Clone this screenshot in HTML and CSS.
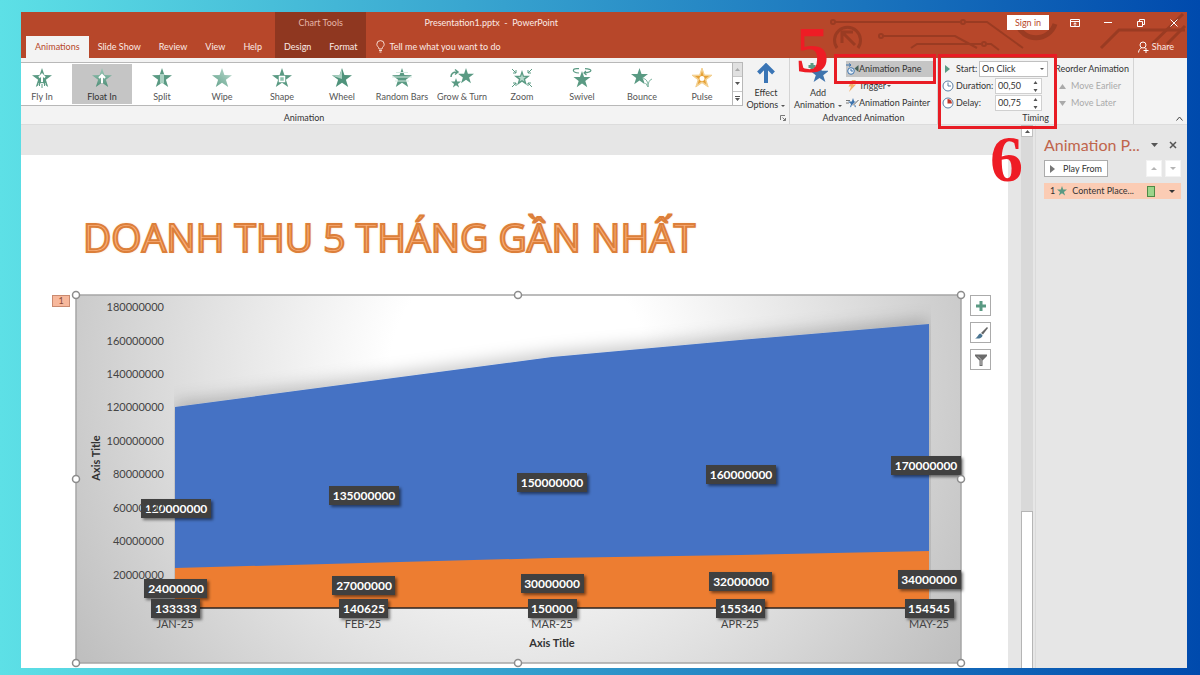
FILE: index.html
```
<!DOCTYPE html>
<html lang="vi">
<head>
    <meta charset="UTF-8">
    <meta name="viewport" content="width=device-width, initial-scale=1.0">
    <title>Presentation1.pptx - PowerPoint</title>
    <link rel="stylesheet" href="styles.css">
</head>
<body>
    <!-- Shared icon shapes -->
    <svg class="defs" width="0" height="0" aria-hidden="true">
        <defs>
            <linearGradient id="fadeDown" x1="0" y1="0" x2="0" y2="1">
                <stop offset="0" stop-color="#9cc9b8"/>
                <stop offset="1" stop-color="#4f8f78"/>
            </linearGradient>
            <linearGradient id="fadeUp" x1="1" y1="0" x2="0" y2="1">
                <stop offset="0" stop-color="#bfded2"/>
                <stop offset="1" stop-color="#5f9f88"/>
            </linearGradient>
            <symbol id="star" viewBox="0 0 20 20">
                <path d="M10 0L12.4 7.1L20 7.2L13.9 11.8L16.2 19L10 14.7L3.8 19L6.1 11.8L0 7.2L7.6 7.1Z"/>
            </symbol>
        </defs>
    </svg>

    <div class="window">
        <header class="titlebar">
            <svg class="circuit" viewBox="0 0 370 46" aria-hidden="true">
                <g fill="none" stroke="#9a3b22" stroke-width="2">
                    <circle cx="16" cy="10" r="2"/>
                    <path d="M18 10H143M149 10H170L206 36"/>
                    <circle cx="146" cy="10" r="2"/>
                    <circle cx="64" cy="24" r="2"/>
                    <path d="M66 24H138L160 36"/>
                    <path d="M94 36L100 32H164"/>
                    <circle cx="167" cy="32" r="2"/>
                    <path d="M169 32H174L182 38"/>
                    <path d="M20 36A13 13 0 1 1 41 36" stroke-width="3"/>
                    <path d="M25 31V20H36M26 21L38 33" stroke-width="3"/>
                    <path d="M200 12A20 20 0 0 0 238 12" stroke-width="5"/>
                    <path d="M284 36L302 18H368" stroke-width="3"/>
                    <path d="M335 32L366 2M350 32L368 14" stroke-width="3"/>
                </g>
            </svg>
            <nav class="tabs">
                <a class="tab active" href="#animations">Animations</a>
                <a class="tab" href="#slideshow">Slide Show</a>
                <a class="tab" href="#review">Review</a>
                <a class="tab" href="#view">View</a>
                <a class="tab" href="#help">Help</a>
            </nav>
            <div class="context">
                <div class="context-title">Chart Tools</div>
                <nav class="tabs">
                    <a class="tab" href="#design">Design</a>
                    <a class="tab" href="#format">Format</a>
                </nav>
            </div>
            <div class="title-right">
                <div class="title-row">
                    <span class="doc-name">Presentation1.pptx &nbsp;- &nbsp;PowerPoint</span>
                    <button class="sign-in">Sign in</button>
                    <button class="win-btn" aria-label="Ribbon display options">
                        <svg width="10" height="8" viewBox="0 0 10 8"><path d="M.5.5h9v7h-9zM.5 2.5h9M5 7V4M3.500 5L5 3.800L6.500 5" fill="none" stroke="#fff"/></svg>
                    </button>
                    <button class="win-btn" aria-label="Minimize">
                        <svg width="8" height="8" viewBox="0 0 8 8"><path d="M0 3.500h8" stroke="#fff"/></svg>
                    </button>
                    <button class="win-btn" aria-label="Restore">
                        <svg width="8" height="8" viewBox="0 0 8 8"><path d="M.5 2.500h5v5h-5zM2.500 2V.5h5v5H6" fill="none" stroke="#fff"/></svg>
                    </button>
                    <button class="win-btn" aria-label="Close">
                        <svg width="8" height="8" viewBox="0 0 8 8"><path d="M.5.5l7 7M7.500.5l-7 7" stroke="#fff"/></svg>
                    </button>
                </div>
                <div class="title-row">
                    <button class="tell-me">
                        <svg width="9" height="13" viewBox="0 0 9 13"><path d="M3 9C3 7 .8 6.500.8 4.300a3.700 3.700 0 0 1 7.400 0C8.200 6.500 6 7 6 9zM3 10.500h3M3.500 12h2" fill="none" stroke="#f5d9d0"/></svg>
                        Tell me what you want to do
                    </button>
                    <button class="share">
                        <svg width="11" height="12" viewBox="0 0 11 12"><circle cx="5" cy="4" r="3" fill="none" stroke="#fff"/><path d="M.5 11.500C.8 9 2 7.500 3.500 7M6.500 7l1 .6M5.500 9.500h5M8 7v5" fill="none" stroke="#fff"/></svg>
                        Share
                    </button>
                </div>
            </div>
        </header>

        <section class="ribbon">
            <div class="group group-animation">
                <div class="group-body">
                    <div class="gallery">
                        <div class="effects">
                            <button class="effect">
                                <svg viewBox="0 0 20 20"><use href="#star" fill="#5a9a83"/><path d="M10 6V14M7 9.500L10 6.500L13 9.500" fill="none" stroke="#fff" stroke-width="2"/><path d="M7.500 15v4M10 16v4M12.500 15v4" stroke="#fff" stroke-width="2"/><path d="M7.500 15v3M10 16v4M12.500 15v3" stroke="#5a9a83"/></svg>
                                Fly In
                            </button>
                            <button class="effect selected">
                                <svg viewBox="0 0 20 20"><use href="#star" fill="url(#fadeDown)"/><path d="M10 7V15M7 10L10 7L13 10" fill="none" stroke="#fff" stroke-width="2"/></svg>
                                Float In
                            </button>
                            <button class="effect">
                                <svg viewBox="0 0 20 20"><use href="#star" fill="#5a9a83"/><path d="M8 6h4v10l-2-1.300l-2 1.300z" fill="#a9d0c1"/></svg>
                                Split
                            </button>
                            <button class="effect">
                                <svg viewBox="0 0 20 20"><use href="#star" fill="url(#fadeUp)"/></svg>
                                Wipe
                            </button>
                            <button class="effect">
                                <svg viewBox="0 0 20 20"><use href="#star" fill="#5a9a83"/><path d="M7.500 8.500h5v5h-5z" fill="#8ec2ae" stroke="#fff" stroke-width="1.500"/></svg>
                                Shape
                            </button>
                            <button class="effect">
                                <svg viewBox="0 0 20 20"><use href="#star" fill="#4f937b"/><path d="M10 1V11L1 8V7.200L7.600 7.100Z" fill="#a9d0c1"/></svg>
                                Wheel
                            </button>
                            <button class="effect">
                                <svg viewBox="0 0 20 20"><use href="#star" fill="#5a9a83"/><path d="M4 4.500h12M0 9h20M3 13h14" stroke="#d4e9e0"/></svg>
                                Random Bars
                            </button>
                            <button class="effect">
                                <svg class="wide" viewBox="0 0 24 20"><use href="#star" x="8" y="0" width="16" height="16" fill="#5a9a83"/><use href="#star" x="1" y="10" width="10" height="10" fill="#5a9a83"/><path d="M1 9C1 5 4 4 7 4M5 1.500L8 4L5 6.500" fill="none" stroke="#5a9a83" stroke-width="1.500"/></svg>
                                Grow &amp; Turn
                            </button>
                            <button class="effect">
                                <svg class="wide" viewBox="0 0 24 20"><use href="#star" x="4" y="2" width="16" height="16" fill="#5a9a83"/><use href="#star" x="8" y="6" width="8" height="8" fill="#b7dacc"/><path d="M2 1l4 4M6 2v3H3M22 1l-4 4M18 2v3h3M2 19l4-4M3 15h3v3M22 19l-4-4M21 15h-3v3" fill="none" stroke="#5a9a83"/></svg>
                                Zoom
                            </button>
                            <button class="effect">
                                <svg viewBox="0 0 20 20"><use href="#star" x="1" y="3" width="18" height="17" fill="#5a9a83"/><path d="M7 5C-1 4 0 0 7 .7M13 .7C21 1 21 4 12 5M14 3L12 5L14.500 7" fill="none" stroke="#5a9a83" stroke-width="1.200"/></svg>
                                Swivel
                            </button>
                            <button class="effect">
                                <svg class="wide" viewBox="0 0 24 20"><use href="#star" x="1" y="0" width="17" height="17" fill="#5a9a83"/><path d="M12 10C17 11 18 14 18 19M18 19C18 15 19 12 22 11M15.500 15l2.500 4" fill="none" stroke="#7fb5a1"/></svg>
                                Bounce
                            </button>
                            <button class="effect">
                                <svg viewBox="0 0 20 20"><use href="#star" fill="#f3cf8e" stroke="#f3cf8e" stroke-width="1"/><use href="#star" x="3" y="3" width="14" height="14" fill="#e6a136"/><circle cx="10" cy="10.500" r="2.500" fill="#fff"/></svg>
                                Pulse
                            </button>
                        </div>
                        <div class="gallery-scroll">
                            <button class="disabled" aria-label="Up"><svg width="5" height="3" viewBox="0 0 5 3"><path d="M0 3h5L2.500 0z" fill="#aaa"/></svg></button>
                            <button aria-label="Down"><svg width="5" height="3" viewBox="0 0 5 3"><path d="M0 0h5L2.500 3z" fill="#555"/></svg></button>
                            <button aria-label="More"><svg width="5" height="5" viewBox="0 0 5 5"><path d="M0 0h5v1h-5zM0 2h5L2.500 5z" fill="#555"/></svg></button>
                        </div>
                    </div>
                    <button class="big-btn effect-options">
                        <svg width="18" height="20" viewBox="0 0 18 20"><path d="M9 20V3M1.500 10L9 2.500L16.500 10" fill="none" stroke="#3a75b5" stroke-width="4"/></svg>
                        <span>Effect<br>Options <i class="caret"></i></span>
                    </button>
                </div>
                <div class="group-label">
                    <span>Animation</span>
                    <svg width="6" height="6" viewBox="0 0 6 6"><path d="M.5 5V.5H5M2.500 2.500L5.500 5.500M5.500 3v2.500H3" fill="none" stroke="#777"/></svg>
                </div>
            </div>

            <div class="group group-advanced">
                <div class="group-body">
                    <button class="big-btn">
                        <svg width="20" height="20" viewBox="0 0 20 20"><use href="#star" x="2" y="1" width="19" height="19" fill="#3f74ad"/><path d="M4 0v7M.5 3.500h7" stroke="#5a9a83" stroke-width="3"/></svg>
                        <span>Add<br>Animation <i class="caret"></i></span>
                    </button>
                    <div class="stack">
                        <button class="row-btn pressed">
                            <svg width="13" height="12" viewBox="0 0 13 12"><circle cx="5" cy="8" r="3.300" fill="#e8f0f7" stroke="#3f74ad"/><path d="M5 6v2h2M0 2h5M3 .5L5 2L3 3.500" fill="none" stroke="#3f74ad"/><path d="M12.500 2v7L8.500 5.500z" fill="#47635a"/></svg>
                            Animation Pane
                        </button>
                        <button class="row-btn">
                            <svg width="13" height="12" viewBox="0 0 13 12"><path d="M6 0H10L7 4.500H10L3 12L5 6.500H2.500z" fill="#f3b169"/></svg>
                            Trigger <i class="caret"></i>
                        </button>
                        <button class="row-btn">
                            <svg width="13" height="12" viewBox="0 0 13 12"><use href="#star" x="2" y="1" width="10" height="10" fill="#3f74ad"/><path d="M0 3.500h4M0 6h3" stroke="#777"/><path d="M12.500 3L6 9.500" stroke="#fff" stroke-width="2"/><path d="M12.500 3L7 8.500" stroke="#555"/></svg>
                            Animation Painter
                        </button>
                    </div>
                </div>
                <div class="group-label"><span>Advanced Animation</span></div>
                <div class="mark mark-pane"></div>
                <div class="step step-five">5</div>
            </div>

            <div class="group group-timing">
                <div class="group-body">
                    <div class="timing">
                        <div class="field">
                            <svg width="12" height="12" viewBox="0 0 12 12"><path d="M3 2v8L8 6z" fill="#5a9a83"/></svg>
                            <label for="start">Start:</label>
                            <div class="drop">
                                <select id="start"><option>On Click</option></select>
                                <i class="caret"></i>
                            </div>
                        </div>
                        <div class="field">
                            <svg width="12" height="12" viewBox="0 0 12 12"><circle cx="6" cy="6" r="5" fill="#fff" stroke="#5d7fa3"/><path d="M6 2.500V6h3" fill="none" stroke="#5d7fa3"/></svg>
                            <label for="duration">Duration:</label>
                            <div class="spin">
                                <input id="duration" type="text" value="00,50">
                                <svg width="5" height="11" viewBox="0 0 5 11"><path d="M.5 3h4L2.500 0zM.5 8h4L2.500 11z" fill="#555"/></svg>
                            </div>
                        </div>
                        <div class="field">
                            <svg width="12" height="12" viewBox="0 0 12 12"><circle cx="6" cy="6" r="5" fill="#fff" stroke="#5d7fa3"/><path d="M5.500 6.500V2A4.500 4.500 0 0 1 10 6.500z" fill="#c0392b"/></svg>
                            <label for="delay">Delay:</label>
                            <div class="spin">
                                <input id="delay" type="text" value="00,75">
                                <svg width="5" height="11" viewBox="0 0 5 11"><path d="M.5 3h4L2.500 0zM.5 8h4L2.500 11z" fill="#555"/></svg>
                            </div>
                        </div>
                    </div>
                    <div class="stack reorder">
                        <div class="row-btn heading">Reorder Animation</div>
                        <button class="row-btn" disabled>
                            <svg width="7" height="5" viewBox="0 0 7 5"><path d="M0 5h7L3.500 0z" fill="#aaa"/></svg>
                            Move Earlier
                        </button>
                        <button class="row-btn" disabled>
                            <svg width="7" height="5" viewBox="0 0 7 5"><path d="M0 0h7L3.500 5z" fill="#aaa"/></svg>
                            Move Later
                        </button>
                    </div>
                </div>
                <div class="group-label"><span>Timing</span></div>
                <div class="mark mark-timing"></div>
                <div class="step step-six">6</div>
            </div>

            <button class="collapse" aria-label="Collapse ribbon">
                <svg width="7" height="5" viewBox="0 0 7 5"><path d="M.5 4.500L3.500 1L6.500 4.500" fill="none" stroke="#444"/></svg>
            </button>
        </section>

        <main class="workspace">
            <div class="canvas">
                <div class="slide">
                    <h1>DOANH THU 5 THÁNG GẦN NHẤT</h1>
                    <div class="chart-row">
                        <span class="anim-tag">1</span>
                        <svg class="chart" viewBox="0 0 885 368">
                            <defs>
                                <radialGradient id="chartBg" gradientUnits="userSpaceOnUse" cx="443" cy="80" r="520">
                                    <stop offset="0.25" stop-color="#ffffff"/>
                                    <stop offset="0.6" stop-color="#e2e2e2"/>
                                    <stop offset="1" stop-color="#bfbfbf"/>
                                </radialGradient>
                                <filter id="areaShadow" x="-10%" y="-20%" width="120%" height="140%">
                                    <feDropShadow dx="0" dy="-5" stdDeviation="8" flood-color="#000" flood-opacity="0.2"/>
                                </filter>
                                <filter id="labelShadow" x="-20%" y="-40%" width="150%" height="200%">
                                    <feDropShadow dx="2" dy="2" stdDeviation="1.500" flood-color="#000" flood-opacity="0.5"/>
                                </filter>
                                <clipPath id="plotClip"><rect x="98" y="0" width="757" height="314"/></clipPath>
                            </defs>
                            <rect width="885" height="368" fill="url(#chartBg)" stroke="#a6a6a6" stroke-width="1.500"/>

                            <!-- Areas -->
                            <g clip-path="url(#plotClip)">
                                <path d="M99 112L287 87L476 62L664 45L853 29V313H99Z" fill="#4472c4" filter="url(#areaShadow)"/>
                            </g>
                            <path d="M99 273L287 268L476 263L664 260L853 256V313H99Z" fill="#ed7d31"/>
                            <path d="M99 313H853" stroke="#2b2320" stroke-width="1.500"/>

                            <!-- Data labels -->
                            <g class="data-labels" filter="url(#labelShadow)">
                                <rect x="65" y="204" width="70" height="19"/>
                                <rect x="253" y="191" width="70" height="19"/>
                                <rect x="441" y="178" width="70" height="19"/>
                                <rect x="630" y="170" width="70" height="19"/>
                                <rect x="815" y="161" width="70" height="19"/>
                                <rect x="68" y="284" width="63" height="19"/>
                                <rect x="256" y="281" width="63" height="19"/>
                                <rect x="445" y="279" width="63" height="19"/>
                                <rect x="633" y="277" width="63" height="19"/>
                                <rect x="822" y="275" width="63" height="19"/>
                                <rect x="75" y="304" width="49" height="19"/>
                                <rect x="263" y="304" width="49" height="19"/>
                                <rect x="452" y="304" width="49" height="19"/>
                                <rect x="640" y="304" width="49" height="19"/>
                                <rect x="829" y="304" width="49" height="19"/>
                            </g>
                            <g class="data-text">
                                <text x="100" y="218">120000000</text>
                                <text x="288" y="205">135000000</text>
                                <text x="476" y="192">150000000</text>
                                <text x="665" y="184">160000000</text>
                                <text x="850" y="175">170000000</text>
                                <text x="100" y="298">24000000</text>
                                <text x="288" y="295">27000000</text>
                                <text x="476" y="293">30000000</text>
                                <text x="665" y="291">32000000</text>
                                <text x="853" y="289">34000000</text>
                                <text x="100" y="318">133333</text>
                                <text x="288" y="318">140625</text>
                                <text x="476" y="318">150000</text>
                                <text x="665" y="318">155340</text>
                                <text x="853" y="318">154545</text>
                            </g>

                            <!-- Axes -->
                            <g class="axis-y">
                                <text x="88" y="16">180000000</text>
                                <text x="88" y="50">160000000</text>
                                <text x="88" y="83">140000000</text>
                                <text x="88" y="116">120000000</text>
                                <text x="88" y="150">100000000</text>
                                <text x="88" y="183">80000000</text>
                                <text x="88" y="217">60000000</text>
                                <text x="88" y="250">40000000</text>
                                <text x="88" y="284">20000000</text>
                            </g>
                            <g class="axis-x">
                                <text x="99" y="333">JAN-25</text>
                                <text x="287" y="333">FEB-25</text>
                                <text x="476" y="333">MAR-25</text>
                                <text x="664" y="333">APR-25</text>
                                <text x="853" y="333">MAY-25</text>
                            </g>
                            <g class="axis-title">
                                <text x="476" y="352">Axis Title</text>
                                <text transform="translate(24 163) rotate(-90)">Axis Title</text>
                            </g>

                            <!-- Resize handles -->
                            <g class="handles">
                                <circle cx="0" cy="0" r="3.500"/>
                                <circle cx="442" cy="0" r="3.500"/>
                                <circle cx="885" cy="0" r="3.500"/>
                                <circle cx="0" cy="184" r="3.500"/>
                                <circle cx="885" cy="184" r="3.500"/>
                                <circle cx="0" cy="368" r="3.500"/>
                                <circle cx="442" cy="368" r="3.500"/>
                                <circle cx="885" cy="368" r="3.500"/>
                            </g>
                        </svg>
                        <div class="chart-tools">
                            <button aria-label="Chart elements"><svg width="14" height="14" viewBox="0 0 14 14"><path d="M7 2v10M2 7h10" stroke="#5a9a83" stroke-width="3"/></svg></button>
                            <button aria-label="Chart styles"><svg width="14" height="14" viewBox="0 0 14 14"><path d="M13 1L14 2L9 8.500L7 7z" fill="#666"/><path d="M6.500 7.500L8.500 9.200C8.500 12 5 13 1 12.500C4 11.500 4 8 6.500 7.500z" fill="#4a7592"/></svg></button>
                            <button aria-label="Chart filters"><svg width="14" height="14" viewBox="0 0 14 14"><path d="M1 1.500H13V3L8.500 7.500V13H5.500V7.500L1 3z" fill="#6b6b6b"/><path d="M4 3.500L7 6.500V12" fill="none" stroke="#c4c4c4"/></svg></button>
                        </div>
                    </div>
                </div>
            </div>
            <div class="scrollbar">
                <button aria-label="Scroll up"><svg width="5" height="3" viewBox="0 0 5 3"><path d="M0 3h5L2.500 0z" fill="#555"/></svg></button>
                <div class="thumb"></div>
            </div>
            <aside class="pane">
                <div class="pane-head">
                    <h2>Animation P...</h2>
                    <button aria-label="Pane options"><svg width="7" height="4" viewBox="0 0 7 4"><path d="M0 0h7L3.500 4z" fill="#555"/></svg></button>
                    <button aria-label="Close pane"><svg width="8" height="8" viewBox="0 0 8 8"><path d="M1 1l6 6M7 1L1 7" stroke="#555" stroke-width="1.500"/></svg></button>
                </div>
                <div class="pane-actions">
                    <button class="play"><svg width="5" height="8" viewBox="0 0 5 8"><path d="M0 0v8L5 4z" fill="#777"/></svg>Play From</button>
                    <button class="move" disabled aria-label="Move up"><svg width="6" height="3" viewBox="0 0 6 3"><path d="M0 3h6L3 0z" fill="#b5b5b5"/></svg></button>
                    <button class="move" disabled aria-label="Move down"><svg width="6" height="3" viewBox="0 0 6 3"><path d="M0 0h6L3 3z" fill="#b5b5b5"/></svg></button>
                </div>
                <div class="pane-item">
                    <span>1</span>
                    <svg width="10" height="10" viewBox="0 0 20 20"><use href="#star" fill="#5a9a83"/></svg>
                    <span class="item-name">Content Place...</span>
                    <span class="bar"></span>
                    <svg width="6" height="3" viewBox="0 0 6 3"><path d="M0 0h6L3 3z" fill="#333"/></svg>
                </div>
            </aside>
        </main>
    </div>
</body>
</html>
```

FILE: styles.css
```
* {
    box-sizing: border-box;
}
body {
    margin: 0;
    padding: 12px 13px 7px 21px;
    min-height: 100vh;
    display: flex;
    background: linear-gradient(90deg, #5de0e6, #004aad);
    font-family: Lato, "Open Sans", sans-serif;
    font-size: 9px;
    line-height: 12px;
    color: #333;
}
button, input, select {
    font: inherit;
    color: inherit;
    margin: 0;
    padding: 0;
    border: 0;
    background: none;
}
button {
    display: flex;
    align-items: center;
    justify-content: center;
    white-space: nowrap;
}
.defs {
    position: absolute;
}
.window {
    flex: 1;
    min-width: 0;
    display: flex;
    flex-direction: column;
    background: #e6e6e6;
}

/* Title bar */
.titlebar {
    position: relative;
    display: flex;
    height: 46px;
    background: #b7472a;
    color: #fbeae5;
}
.circuit {
    position: absolute;
    top: 0;
    right: 0;
    width: 370px;
    height: 46px;
}
.tabs {
    display: flex;
    align-self: flex-end;
}
.titlebar > .tabs {
    padding-left: 5px;
    padding-right: 4px;
}
.tab {
    height: 22px;
    padding: 0 9px;
    line-height: 22px;
    color: inherit;
    text-decoration: none;
}
.tab.active {
    background: #f3f3f3;
    color: #b7472a;
}
.context {
    display: flex;
    flex-direction: column;
    justify-content: space-between;
    background: #8f3720;
}
.context-title {
    line-height: 22px;
    text-align: center;
    color: #e5b5a7;
}
.title-right {
    position: relative;
    flex: 1;
    display: flex;
    flex-direction: column;
}
.title-row {
    height: 21px;
    display: flex;
    align-items: center;
}
.title-row + .title-row {
    height: 25px;
    padding-top: 2px;
}
.doc-name {
    margin-left: 58px;
    margin-right: auto;
}
.sign-in {
    width: 42px;
    height: 15px;
    margin-right: 12px;
    background: #fff;
    color: #b7472a;
}
.win-btn {
    width: 27px;
    height: 20px;
    margin-left: 6px;
}
.win-btn:nth-of-type(2) {
    margin-left: 0;
}
.tell-me {
    gap: 4px;
    margin-left: 10px;
    margin-right: auto;
}
.share {
    gap: 3px;
    margin-right: 13px;
}

/* Ribbon */
.ribbon {
    position: relative;
    display: flex;
    height: 67px;
    padding-right: 53px;
    background: #f3f3f3;
    border-bottom: 1px solid #dcdcdc;
}
.group {
    position: relative;
    display: flex;
    flex-direction: column;
    justify-content: space-between;
    padding-top: 3px;
    border-right: 1px solid #d4d4d4;
}
.group-body {
    display: flex;
    height: 50px;
}
.group-label {
    display: flex;
    align-items: center;
    justify-content: center;
}
.group-label span {
    text-align: center;
}
.group-animation {
    flex: 1;
    min-width: 0;
}
.group-animation .group-label {
    padding-right: 3px;
}
.group-animation .group-label span {
    flex: 1;
    padding-right: 193px;
}
.gallery {
    flex: 1;
    min-width: 0;
    display: flex;
    height: 44px;
    margin-top: 1px;
    background: #fff;
    border: 1px solid #b8b8b8;
    border-left: 0;
}
.effects {
    flex: 1;
    min-width: 0;
    display: flex;
    justify-content: flex-end;
    overflow: hidden;
}
.effect {
    flex: 0 0 60px;
    flex-direction: column;
    justify-content: flex-start;
    gap: 3px;
    margin: 1px 0;
    padding-top: 4px;
    color: #555;
}
.effect svg {
    width: 20px;
    height: 20px;
    flex: none;
}
.effect svg.wide {
    width: 24px;
}
.effect.selected {
    background: #c5c5c5;
    color: #333;
}
.gallery-scroll {
    width: 10px;
    display: flex;
    flex-direction: column;
    border-left: 1px solid #b8b8b8;
}
.gallery-scroll button {
    flex: 1;
    border-top: 1px solid #c8c8c8;
}
.gallery-scroll button.disabled {
    background: #e1e1e1;
    border-top: 0;
}
.big-btn {
    flex-direction: column;
    justify-content: flex-start;
    gap: 4px;
    width: 46px;
    padding-top: 2px;
}
.group-advanced .big-btn {
    width: 56px;
}
.caret {
    display: inline-block;
    margin-left: 1px;
    vertical-align: middle;
    border: 2px solid transparent;
    border-top-color: #555;
    border-bottom: 0;
}
.stack {
    display: flex;
    flex-direction: column;
    gap: 1px;
}
.row-btn {
    justify-content: flex-start;
    gap: 0;
    height: 16px;
    padding-right: 4px;
}
.row-btn.pressed {
    background: #c5c5c5;
}
.group-advanced {
    width: 148px;
}
.group-timing {
    width: 196px;
}
.timing {
    width: 107px;
    margin-left: 4px;
    display: flex;
    flex-direction: column;
    gap: 1px;
}
.field {
    display: flex;
    align-items: center;
    height: 16px;
}
.field label {
    margin-left: 2px;
}
.drop {
    width: 69px;
    height: 16px;
    margin-left: auto;
    display: flex;
    align-items: center;
    padding: 0 3px 0 2px;
    background: #fff;
    border: 1px solid #c0c0c0;
}
.drop select {
    flex: 1;
    min-width: 0;
    appearance: none;
}
.spin {
    width: 47px;
    height: 16px;
    margin-left: auto;
    margin-right: 6px;
    display: flex;
    align-items: center;
    justify-content: space-between;
    padding: 0 3px 0 2px;
    background: #fff;
    border: 1px solid #d0d0d0;
}
.spin input {
    width: 32px;
}
.reorder {
    margin-left: 7px;
}
.reorder .heading {
    line-height: 16px;
    white-space: nowrap;
}
.reorder button {
    gap: 5px;
    padding-left: 4px;
    color: #aaa;
}
.collapse {
    position: absolute;
    right: 4px;
    bottom: 3px;
}

/* Tutorial marks */
.mark {
    position: absolute;
    z-index: 2;
    border: 3px solid #e81c24;
}
.mark-pane {
    top: -4px;
    left: 44px;
    width: 102px;
    height: 30px;
}
.mark-timing {
    top: -4px;
    left: 0;
    width: 119px;
    height: 75px;
}
.step {
    position: absolute;
    z-index: 3;
    font: bold 66px/66px "Liberation Serif", serif;
    color: #ee1c25;
}
.step-five {
    top: -41px;
    left: 6px;
}
.step-six {
    top: 68px;
    left: 52px;
}

/* Workspace */
.workspace {
    flex: 1;
    display: flex;
}
.canvas {
    flex: 1;
    min-width: 0;
    display: flex;
    padding-top: 30px;
}
.slide {
    flex: 1;
    min-width: 0;
    padding-bottom: 5px;
    background: #fff;
}
h1 {
    margin: 0;
    padding: 52px 0 28px 62px;
    font: 400 39px/60px "Open Sans", "Noto Sans", sans-serif;
    color: #fbb07a;
    -webkit-text-stroke: 2px #dc7f3a;
    text-shadow: 0 0 3px #ffc890;
    white-space: nowrap;
}
.chart-row {
    display: grid;
    grid-template-columns: 55px 1fr 47px;
    align-items: start;
}
.anim-tag {
    justify-self: end;
    width: 18px;
    height: 12px;
    margin-right: 6px;
    line-height: 10px;
    text-align: center;
    color: #8b4b36;
    background: #f7b89c;
    border: 1px solid #c98a70;
}
.chart {
    display: block;
    width: 100%;
    height: auto;
    overflow: visible;
    font-family: Lato, sans-serif;
}
.data-labels {
    fill: #404040;
}
.data-text {
    fill: #fff;
    font-size: 12px;
    font-weight: 700;
    text-anchor: middle;
}
.axis-y, .axis-x {
    fill: #444;
    font-size: 11px;
}
.axis-y {
    text-anchor: end;
}
.axis-x, .axis-title {
    text-anchor: middle;
}
.axis-title {
    fill: #333;
    font-size: 11px;
    font-weight: 700;
}
.handles {
    fill: #fff;
    stroke: #8c8c8c;
    stroke-width: 1.5;
}
.chart-tools {
    display: flex;
    flex-direction: column;
    gap: 6px;
    padding-left: 9px;
}
.chart-tools button {
    width: 21px;
    height: 21px;
    background: #fff;
    border: 1px solid #ababab;
}
.scrollbar {
    width: 12px;
    margin-left: 13px;
    display: flex;
    flex-direction: column;
    justify-content: space-between;
    background: #d9d9d9;
}
.scrollbar button {
    height: 12px;
    background: #fff;
    border: 1px solid #c0c0c0;
}
.thumb {
    height: 29%;
    background: #fff;
    border: 1px solid #b5b5b5;
    border-bottom: 0;
}

/* Animation pane */
.pane {
    width: 152px;
    margin-left: 2px;
    padding: 8px 6px 0 8px;
    border-left: 1px solid #dadada;
}
.pane-head {
    display: flex;
    align-items: center;
    justify-content: space-between;
    height: 24px;
    padding-right: 4px;
}
h2 {
    margin: 0;
    font-size: 16px;
    font-weight: 400;
    color: #c0654c;
}
.pane-actions {
    display: flex;
    gap: 3px;
    margin-top: 3px;
}
.pane-actions button {
    height: 17px;
    background: #fff;
    border: 1px solid #ababab;
}
.pane-actions .play {
    width: 64px;
    gap: 8px;
    margin-right: auto;
}
.pane-actions .move {
    width: 16px;
    border-color: #f3f3f3;
}
.pane-item {
    display: flex;
    align-items: center;
    gap: 2px;
    height: 16px;
    margin-top: 6px;
    padding: 0 6px;
    background: #fbccb4;
}
.item-name {
    margin-left: 3px;
}
.bar {
    width: 8px;
    height: 11px;
    margin: 0 auto;
    background: #9bd48a;
    border: 1px solid #4e8a45;
}
```
